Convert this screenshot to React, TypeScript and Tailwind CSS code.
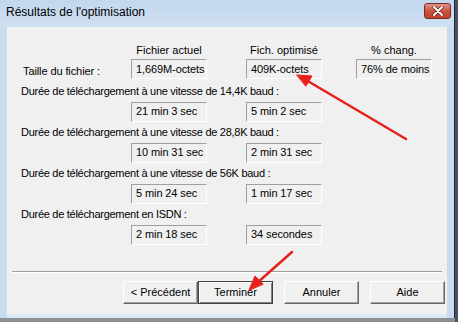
import React from "react";

const font = { fontFamily: '"Liberation Sans", Arial, sans-serif' };

function Box({ children }: { children?: React.ReactNode }) {
  return (
    <div className="w-[76px] h-[20px] border-t border-l border-t-[#a0a0a0] border-l-[#a0a0a0] border-b border-r border-b-white border-r-white flex items-center pl-[4px] text-[11px] text-black leading-none whitespace-nowrap tracking-[-0.1px]">
      {children}
    </div>
  );
}

function Btn({ children, def }: { children: React.ReactNode; def?: boolean }) {
  return (
    <div
      className={
        "w-[75px] h-[23px] flex items-center justify-center text-[11px] text-black bg-[#f0f0f0] " +
        (def
          ? "border border-[#404040] shadow-[inset_1px_1px_0_#ffffff,inset_-1px_-1px_0_#808080]"
          : "border-t border-l border-t-white border-l-white border-b border-r border-b-[#696969] border-r-[#696969] shadow-[inset_-1px_-1px_0_#a0a0a0]")
      }
    >
      {children}
    </div>
  );
}

function Section({ label, a, b }: { label: string; a: string; b: string }) {
  return (
    <div className="flex flex-col">
      <div className="pl-[14px] h-[13px] text-[11px] leading-[13px] whitespace-nowrap tracking-[-0.28px]">{label}</div>
      <div className="flex pl-[124px] mt-[4px] gap-[39px]">
        <Box>{a}</Box>
        <Box>{b}</Box>
      </div>
    </div>
  );
}

export default function App() {
  return (
    <div className="relative w-[458px] h-[322px] bg-[#4a5260] overflow-hidden" style={font}>
      <div className="w-[455px] h-[318px] flex flex-col bg-[#c9dcef] border-r border-[#1d2a38]">
        {/* Title bar */}
        <div className="relative h-[27px] flex items-center pl-[6px] pb-[3px] text-[12px] text-black bg-gradient-to-b from-[#c2d8ee] to-[#cfe0f1]">
          Résultats de l'optimisation
          <div className="absolute left-[424px] top-[3px] w-[27px] h-[16px] rounded-[3px] border border-[#7a2b25] bg-gradient-to-b from-[#e0958a] via-[#c9523f] to-[#c0402e] flex items-center justify-center">
            <svg width="12" height="10" viewBox="0 0 12 10">
              <path d="M2 1 L10 9 M10 1 L2 9" stroke="#5a1a12" strokeWidth="3.2" strokeLinecap="round" />
              <path d="M2 1 L10 9 M10 1 L2 9" stroke="#ffffff" strokeWidth="2" strokeLinecap="round" />
            </svg>
          </div>
        </div>
        {/* Client area */}
        <div className="mx-[7px] flex-1 bg-[#f0f0f0] flex flex-col text-black text-[11px] border-b-[4px] border-[#dbe8f5]">
          <div className="pt-[17px] flex pl-[124px] gap-[39px] h-[14px] box-content leading-[13px]">
            <div className="w-[76px] text-center">Fichier actuel</div>
            <div className="w-[76px] text-center">Fich. optimisé</div>
            <div className="w-[76px] text-center ml-[-5px]">% chang.</div>
          </div>
          <div className="flex mt-[1px] items-center">
            <div className="w-[124px] pl-[16px] pt-[4px] tracking-[-0.1px]">Taille du fichier :</div>
            <Box>1,669M-octets</Box>
            <div className="w-[39px]" />
            <Box>409K-octets</Box>
            <div className="w-[34px]" />
            <Box>76% de moins</Box>
          </div>
          <div className="flex flex-col gap-[4px] mt-[5px]">
            <Section label="Durée de téléchargement à une vitesse de 14,4K baud :" a="21 min 3 sec" b="5 min 2 sec" />
            <Section label="Durée de téléchargement à une vitesse de 28,8K baud :" a="10 min 31 sec" b="2 min 31 sec" />
            <Section label="Durée de téléchargement à une vitesse de 56K baud :" a="5 min 24 sec" b="1 min 17 sec" />
            <Section label="Durée de téléchargement en ISDN :" a="2 min 18 sec" b="34 secondes" />
          </div>
          <div className="mt-[26px] mx-[5px] h-[2px] border-t border-[#a0a0a0] border-b border-b-white" />
          <div className="flex mt-[8px] pl-[116px]">
            <Btn>&lt; Précédent</Btn>
            <Btn def>Terminer</Btn>
            <div className="w-[11px]" />
            <Btn>Annuler</Btn>
            <div className="w-[11px]" />
            <Btn>Aide</Btn>
          </div>
        </div>
      </div>
      <div className="absolute left-0 top-[318px] w-[455px] h-[4px] bg-[#8c8f94]" />
      {/* Annotation arrows */}
      <svg className="absolute left-0 top-0" width="458" height="322" viewBox="0 0 458 322">
        <g stroke="#e8201c" strokeWidth="2.5" strokeLinecap="round" fill="#e8201c">
          <line x1="406" y1="139" x2="306" y2="80" />
          <polygon points="297,75 312,76 306,86" strokeWidth="1" strokeLinejoin="round" />
          <line x1="292" y1="252" x2="257" y2="283" />
          <polygon points="249,290 255,276 263,284" strokeWidth="1" strokeLinejoin="round" />
        </g>
      </svg>
    </div>
  );
}
